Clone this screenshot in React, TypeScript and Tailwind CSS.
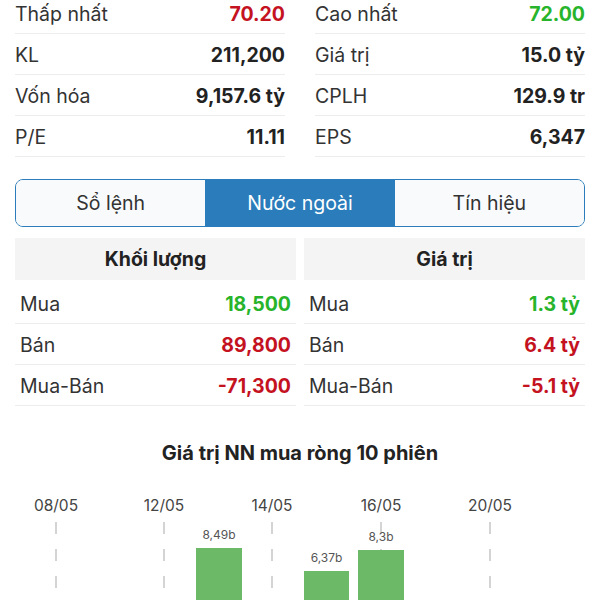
import React from 'react'

type Stat = { label: string; value: string; color?: string }

const RED = 'text-[#c4121f]'
const GREEN = 'text-[#27b42b]'

const leftStats: Stat[] = [
  { label: 'Thấp nhất', value: '70.20', color: RED },
  { label: 'KL', value: '211,200' },
  { label: 'Vốn hóa', value: '9,157.6 tỷ' },
  { label: 'P/E', value: '11.11' },
]

const rightStats: Stat[] = [
  { label: 'Cao nhất', value: '72.00', color: GREEN },
  { label: 'Giá trị', value: '15.0 tỷ' },
  { label: 'CPLH', value: '129.9 tr' },
  { label: 'EPS', value: '6,347' },
]

const volumeRows: Stat[] = [
  { label: 'Mua', value: '18,500', color: GREEN },
  { label: 'Bán', value: '89,800', color: RED },
  { label: 'Mua-Bán', value: '-71,300', color: RED },
]

const valueRows: Stat[] = [
  { label: 'Mua', value: '1.3 tỷ', color: GREEN },
  { label: 'Bán', value: '6.4 tỷ', color: RED },
  { label: 'Mua-Bán', value: '-5.1 tỷ', color: RED },
]

const tabs = ['Sổ lệnh', 'Nước ngoài', 'Tín hiệu']

const dates = [
  { label: '08/05', x: 56 },
  { label: '12/05', x: 164 },
  { label: '14/05', x: 272 },
  { label: '16/05', x: 381 },
  { label: '20/05', x: 490 },
]

const bars = [
  { x: 196, top: 546, w: 46, label: '8,49b' },
  { x: 304, top: 569, w: 45, label: '6,37b' },
  { x: 358, top: 548, w: 46, label: '8,3b' },
]

function StatRow({ stat, px = '' }: { stat: Stat; px?: string }) {
  return (
    <div className={`flex h-[41px] items-center justify-between border-b border-[#ededed] pt-[3px] ${px}`}>
      <span className="text-[19.5px] text-[#333]">{stat.label}</span>
      <span className={`text-[19.5px] font-bold ${stat.color ?? 'text-[#222]'}`}>{stat.value}</span>
    </div>
  )
}

function Chart() {
  const chartTop = 480
  return (
    <svg width={600} height={120} viewBox={`0 ${chartTop} 600 120`} className="block">
      {dates.map((d) => (
        <g key={d.label}>
          <text x={d.x} y={509} textAnchor="middle" fontSize={15.5} fill="#444">
            {d.label}
          </text>
          {[520, 547, 574].map((y) => (
            <line key={y} x1={d.x} x2={d.x} y1={y} y2={y + 12} stroke="#bdbdbd" strokeWidth={1.3} />
          ))}
        </g>
      ))}
      {bars.map((b) => (
        <g key={b.label}>
          <rect x={b.x} y={b.top} width={b.w} height={600 - b.top} fill="#6cba67" />
          <text x={b.x + b.w / 2} y={b.top - 9} textAnchor="middle" fontSize={12} fill="#555">
            {b.label}
          </text>
        </g>
      ))}
    </svg>
  )
}

export default function App() {
  return (
    <div
      className="h-[600px] w-[600px] overflow-hidden bg-white"
      style={{ fontFamily: 'Inter, "Noto Sans", sans-serif' }}
    >
      {/* Summary stats */}
      <div className="-mt-[7px] grid grid-cols-2 gap-x-[30px] px-[15px]">
        <div>
          {leftStats.map((s) => (
            <StatRow key={s.label} stat={s} />
          ))}
        </div>
        <div>
          {rightStats.map((s) => (
            <StatRow key={s.label} stat={s} />
          ))}
        </div>
      </div>

      {/* Tabs */}
      <div className="mx-[15px] mt-[22px] flex h-[48px] overflow-hidden rounded-[8px] border border-[#2a7cba]">
        {tabs.map((t, i) => (
          <div
            key={t}
            className={`flex flex-1 items-center justify-center pt-[2px] text-[19.5px] ${
              i === 1 ? 'bg-[#2a7cba] text-white' : 'bg-[#f8fafb] text-[#333]'
            }`}
          >
            {t}
          </div>
        ))}
      </div>

      {/* Foreign trading */}
      <div className="mt-[11px] grid grid-cols-2 gap-x-[8px] px-[15px]">
        {[
          { title: 'Khối lượng', rows: volumeRows },
          { title: 'Giá trị', rows: valueRows },
        ].map((col) => (
          <div key={col.title}>
            <div className="flex h-[42px] items-center justify-center bg-[#f4f4f4] pt-[2px] text-[19.5px] font-bold text-[#222]">
              {col.title}
            </div>
            <div className="mt-[3px]">
              {col.rows.map((r) => (
                <StatRow key={r.label} stat={r} px="px-[5px]" />
              ))}
            </div>
          </div>
        ))}
      </div>

      {/* Chart */}
      <div className="mt-[32px] text-center text-[20px] font-bold text-[#222]">
        Giá trị NN mua ròng 10 phiên
      </div>
      <div className="mt-[14px]">
        <Chart />
      </div>
    </div>
  )
}
